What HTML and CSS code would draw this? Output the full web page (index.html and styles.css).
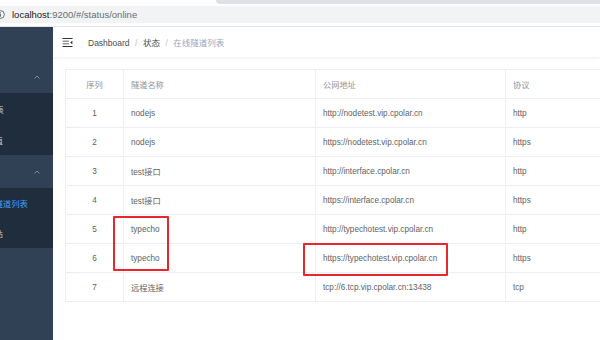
FILE: index.html
```html
<!DOCTYPE html>
<html lang="zh-CN">
<head>
<meta charset="utf-8">
<title>在线隧道列表</title>
<link rel="stylesheet" href="styles.css">
</head>
<body>
<div class="tabstrip"><div class="tab-active"></div><div class="tab-rest"></div></div>
<div class="toolbar">
  <div class="omnibox">
    <svg class="info" viewBox="0 0 10 10"><circle cx="5" cy="5" r="4.3" fill="none" stroke="#5f6368" stroke-width="1"/><rect x="4.5" y="4.2" width="1" height="3.2" fill="#5f6368"/><rect x="4.5" y="2.6" width="1" height="1" fill="#5f6368"/></svg>
    <span class="host">localhost</span><span class="path">:9200/#/status/online</span>
  </div>
</div>
<div class="app">
  <aside class="sidebar">
    <div class="menu-top"></div>
    <div class="submenu-title"><svg class="chev" viewBox="0 0 6 4"><path d="M0.5 3.5 L3 1 L5.5 3.5" fill="none" stroke="#8a96a6" stroke-width="0.9"/></svg></div>
    <div class="submenu-items">
      <div class="sub-item end-4"><span>隧道列表</span></div>
      <div class="sub-item end-3"><span>隧道值</span></div>
    </div>
    <div class="submenu-title"><svg class="chev" viewBox="0 0 6 4"><path d="M0.5 3.5 L3 1 L5.5 3.5" fill="none" stroke="#8a96a6" stroke-width="0.9"/></svg></div>
    <div class="submenu-items group2">
      <div class="sub-item end-28 active"><span>在线隧道列表</span></div>
      <div class="sub-item end-3"><span>系统站</span></div>
    </div>
  </aside>
  <section class="main">
    <div class="navbar">
      <svg class="hamburger" viewBox="0 0 1024 1024"><path transform="rotate(180 512 512)" d="M408 442h480c4.4 0 8-3.6 8-8v-56c0-4.4-3.6-8-8-8H408c-4.4 0-8 3.6-8 8v56c0 4.4 3.6 8 8 8zm-8 204c0 4.4 3.6 8 8 8h480c4.4 0 8-3.6 8-8v-56c0-4.4-3.6-8-8-8H408c-4.4 0-8 3.6-8 8v56zm504-486H120c-4.4 0-8 3.6-8 8v56c0 4.4 3.6 8 8 8h784c4.4 0 8-3.6 8-8v-56c0-4.4-3.6-8-8-8zm0 632H120c-4.4 0-8 3.6-8 8v56c0 4.4 3.6 8 8 8h784c4.4 0 8-3.6 8-8v-56c0-4.4-3.6-8-8-8zM142.4 642.1L298.7 519a8.84 8.84 0 0 0 0-13.9L142.4 381.9c-5.8-4.6-14.4-.5-14.4 6.9v246.3a8.9 8.9 0 0 0 14.4 7z"/></svg>
      <nav class="breadcrumb">
        <span class="crumb">Dashboard</span><span class="sep">/</span><span class="crumb">状态</span><span class="sep">/</span><span class="crumb current">在线隧道列表</span>
      </nav>
    </div>
    <div class="content">
      <div class="table-wrap">
        <table class="tunnels">
          <colgroup><col class="c-idx"><col class="c-name"><col class="c-url"><col class="c-proto"></colgroup>
          <thead>
            <tr><th class="idx">序列</th><th>隧道名称</th><th>公网地址</th><th>协议</th></tr>
          </thead>
          <tbody>
            <tr><td class="idx">1</td><td>nodejs</td><td>http://nodetest.vip.cpolar.cn</td><td>http</td></tr>
            <tr><td class="idx">2</td><td>nodejs</td><td>https://nodetest.vip.cpolar.cn</td><td>https</td></tr>
            <tr><td class="idx">3</td><td>test接口</td><td>http://interface.cpolar.cn</td><td>http</td></tr>
            <tr><td class="idx">4</td><td>test接口</td><td>https://interface.cpolar.cn</td><td>https</td></tr>
            <tr><td class="idx">5</td><td>typecho</td><td>http://typechotest.vip.cpolar.cn</td><td>http</td></tr>
            <tr><td class="idx">6</td><td>typecho</td><td>https://typechotest.vip.cpolar.cn</td><td>https</td></tr>
            <tr><td class="idx">7</td><td>远程连接</td><td>tcp://6.tcp.vip.cpolar.cn:13438</td><td>tcp</td></tr>
          </tbody>
        </table>
        <div class="mark mark-name"></div>
        <div class="mark mark-url"></div>
      </div>
    </div>
  </section>
</div>
</body>
</html>
```

FILE: styles.css
```css
* { box-sizing: border-box; }
html, body { margin: 0; padding: 0; overflow: hidden; }
body {
  width: 600px;
  height: 340px;
  background: #fff;
  font-family: "Liberation Sans", "Noto Sans CJK SC", sans-serif;
}

/* browser chrome */
.tabstrip { display: flex; height: 4px; background: #fff; }
.tab-active { width: 216px; background: #fff; }
.tab-rest { flex: 1; background: #dee1e6; border-bottom-left-radius: 4px; }
.toolbar {
  height: 23px;
  padding: 2px 0 3px;
  border-bottom: 1px solid #e2e4e7;
  background: #fff;
}
.omnibox {
  height: 17px;
  background: #f1f3f4;
  display: flex;
  align-items: center;
  font-size: 9.5px;
  white-space: nowrap;
}
.info { width: 9px; height: 9px; margin-left: -4px; margin-right: 7px; flex-shrink: 0; }
.host { color: #202124; }
.path { color: #6b6f73; }

/* app */
.app { display: flex; height: 313px; }

.sidebar {
  width: 53px;
  flex-shrink: 0;
  background: #304156;
  overflow: hidden;
  font-size: 8.4px;
  color: #bfcbd9;
}
.menu-top { height: 33px; }
.submenu-title {
  height: 33px;
  display: flex;
  align-items: center;
  justify-content: flex-end;
  padding-right: 13px;
}
.chev { width: 6px; height: 4px; }
.submenu-items { background: #1f2d3d; }
.sub-item {
  height: 31px;
  display: flex;
  align-items: center;
  justify-content: flex-end;
  white-space: nowrap;
}
.group2 .sub-item { height: 30px; }
.sub-item span { flex-shrink: 0; }
.end-4 { padding-right: 49px; }
.end-3 { padding-right: 50px; }
.end-28 { padding-right: 25px; }
.sub-item.active { color: #409eff; }

.main {
  flex: 1;
  min-width: 0;
  display: flex;
  flex-direction: column;
  overflow: hidden;
}
.navbar {
  height: 30px;
  flex-shrink: 0;
  display: flex;
  align-items: center;
  padding-left: 8px;
  box-shadow: 0 1px 3px rgba(0, 21, 41, 0.08);
}
.hamburger { width: 13px; height: 13px; fill: #303133; flex-shrink: 0; }
.breadcrumb {
  margin-left: 14px;
  font-size: 8.5px;
  color: #4a4d52;
  white-space: nowrap;
}
.sep { color: #c0c4cc; margin: 0 5.5px; }
.crumb.current { color: #97a8be; }

.content {
  flex: 1;
  padding: 12px;
  overflow: hidden;
}
.table-wrap { position: relative; width: 560px; }
.tunnels {
  width: 560px;
  table-layout: fixed;
  border-collapse: collapse;
  font-size: 8.2px;
  color: #606266;
}
.c-idx { width: 58px; }
.c-name { width: 192px; }
.c-url { width: 190px; }
.c-proto { width: 120px; }
.tunnels tr { height: 29px; }
.tunnels th, .tunnels td {
  border: 1px solid #ebeef5;
  padding: 0 7px;
  text-align: left;
  font-weight: normal;
  white-space: nowrap;
}
.tunnels th { color: #909399; }
.tunnels .idx { text-align: center; }

.mark {
  position: absolute;
  border: 2px solid #e8262b;
  border-radius: 1px;
}
.mark-name { left: 48px; top: 147px; width: 56px; height: 55px; }
.mark-url { left: 238px; top: 174px; width: 145px; height: 33px; }
```
